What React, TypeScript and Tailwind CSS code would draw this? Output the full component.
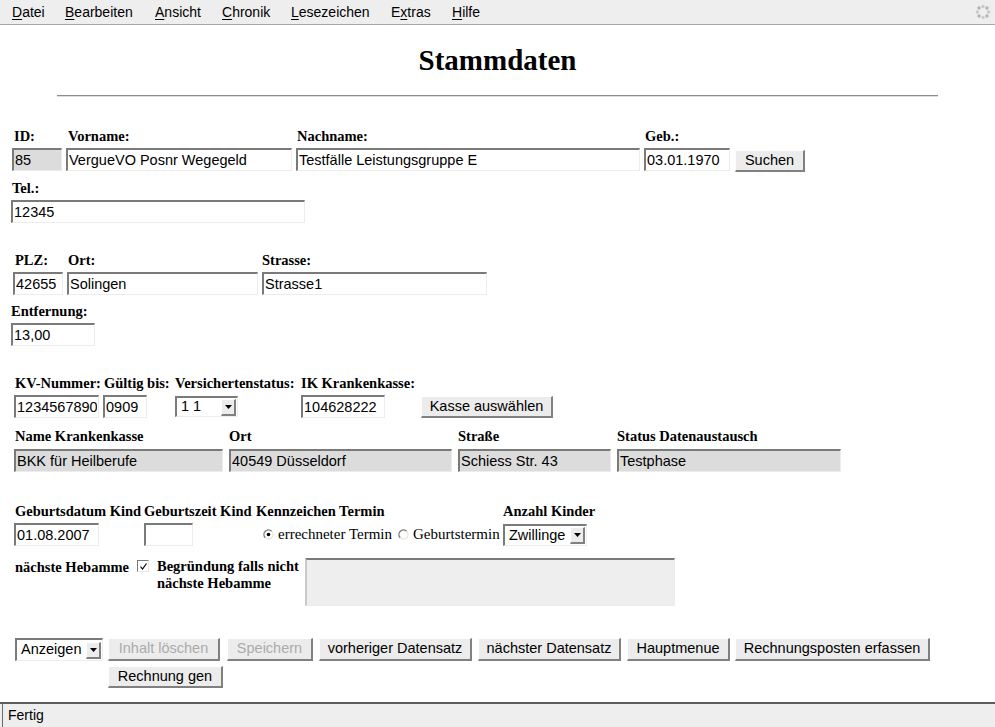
const serif = "font-['Liberation_Serif','Times_New_Roman',serif]";

const insetBorder =
  "border-t-2 border-l-2 border-r border-b border-t-[#7a7a7a] border-l-[#7a7a7a] border-r-[#ececec] border-b-[#ececec]";
const outsetBorder =
  "border-t border-l border-r-2 border-b-2 border-t-white border-l-white border-r-[#808080] border-b-[#808080]";

function Label({ children, className = "" }: { children: React.ReactNode; className?: string }) {
  return (
    <div className={`h-4 whitespace-nowrap text-[14.5px] font-bold leading-4 ${serif} ${className}`}>
      {children}
    </div>
  );
}

function Input({
  w,
  value = "",
  gray = false,
  className = "",
}: {
  w: string;
  value?: string;
  gray?: boolean;
  className?: string;
}) {
  return (
    <input
      readOnly
      value={value}
      className={`block h-[23px] px-[1px] text-[14.5px] text-black outline-none ${insetBorder} ${
        gray ? "bg-[#dcdcdc]" : "bg-white"
      } ${w} ${className}`}
    />
  );
}

function Btn({
  w,
  label,
  disabled = false,
  h = "h-[23px]",
  className = "",
}: {
  w: string;
  label: string;
  disabled?: boolean;
  h?: string;
  className?: string;
}) {
  return (
    <button
      disabled={disabled}
      className={`flex shrink-0 items-center justify-center whitespace-nowrap bg-[#ececec] text-[14.5px] ${outsetBorder} ${
        disabled ? "text-[#ababab]" : "text-black"
      } ${w} ${h} ${className}`}
    >
      {label}
    </button>
  );
}

function Select({ w, value, h = "h-[23px]", className = "" }: { w: string; value: string; h?: string; className?: string }) {
  return (
    <div
      className={`flex shrink-0 items-center justify-between bg-white pl-[4px] pr-[1px] text-[14.5px] ${insetBorder} ${w} ${h} ${className}`}
    >
      <span className="whitespace-nowrap">{value}</span>
      <span className={`flex h-[17px] w-[15px] items-center justify-center bg-[#ececec] ${outsetBorder}`}>
        <svg width="7" height="6" viewBox="0 0 7 6">
          <path d="M0 1h7L3.5 5z" fill="#000" />
        </svg>
      </span>
    </div>
  );
}

function Radio({ checked }: { checked: boolean }) {
  return (
    <svg width="11" height="11" viewBox="0 0 11 11" className="shrink-0">
      <path d="M2.3 8.7A4.5 4.5 0 0 1 8.7 2.3" fill="none" stroke="#7a7a7a" strokeWidth="1.4" />
      <path d="M8.7 2.3A4.5 4.5 0 0 1 2.3 8.7" fill="none" stroke="#e4e4e4" strokeWidth="1.2" />
      {checked && <circle cx="5.5" cy="5.5" r="1.8" fill="#000" />}
    </svg>
  );
}

function Throbber() {
  const dots = Array.from({ length: 8 }, (_, i) => {
    const a = (i / 8) * Math.PI * 2;
    return { x: 8 + Math.cos(a) * 5.6, y: 8 + Math.sin(a) * 5.6 };
  });
  return (
    <svg width="16" height="16" viewBox="0 0 16 16">
      {dots.map((d, i) => (
        <circle key={i} cx={d.x} cy={d.y} r="1.7" fill={i % 2 ? "#b4b4b4" : "#cacaca"} />
      ))}
    </svg>
  );
}

const menu = [
  { pre: "", u: "D", post: "atei", w: "w-[53px]" },
  { pre: "", u: "B", post: "earbeiten", w: "w-[90px]" },
  { pre: "", u: "A", post: "nsicht", w: "w-[67px]" },
  { pre: "", u: "C", post: "hronik", w: "w-[69px]" },
  { pre: "", u: "L", post: "esezeichen", w: "w-[100px]" },
  { pre: "E", u: "x", post: "tras", w: "w-[61px]" },
  { pre: "", u: "H", post: "ilfe", w: "w-[40px]" },
];

export default function App() {
  return (
    <div className="flex h-screen flex-col overflow-hidden bg-white font-['Liberation_Sans',Arial,sans-serif] text-black">
      {/* menu bar */}
      <div className="flex h-[25px] shrink-0 items-center border-b border-b-[#a9a9a9] bg-[#eeeeee] pl-[12px] pr-[4px] text-[14px]">
        {menu.map((m) => (
          <span key={m.u} className={`whitespace-nowrap ${m.w}`}>
            {m.pre}
            <span className="underline underline-offset-2">{m.u}</span>
            {m.post}
          </span>
        ))}
        <span className="ml-auto">
          <Throbber />
        </span>
      </div>

      <div className="min-h-0 flex-1 px-[8px]">
        <h1 className={`mt-[19px] text-center text-[29px] font-bold leading-[33px] ${serif}`}>Stammdaten</h1>
        <div className="mx-auto mt-[18px] h-[2px] w-[90%] border-t border-b border-t-[#8c8c8c] border-b-[#dedede]" />

        {/* ID / Vorname / Nachname / Geb. */}
        <div className="mt-[31px] flex items-start">
          <div className="ml-[4px] w-[54px]">
            <Label className="pl-[2px]">ID:</Label>
            <Input w="w-[50px]" value="85" gray className="mt-[4px]" />
          </div>
          <div className="w-[230px]">
            <Label className="pl-[2px]">Vorname:</Label>
            <Input w="w-[226px]" value="VergueVO Posnr Wegegeld" className="mt-[4px]" />
          </div>
          <div className="w-[348px]">
            <Label className="pl-[1px]">Nachname:</Label>
            <Input w="w-[344px]" value="Testfälle Leistungsgruppe E" className="mt-[4px]" />
          </div>
          <div className="w-[91px]">
            <Label className="pl-[1px]">Geb.:</Label>
            <Input w="w-[86px]" value="03.01.1970" className="mt-[4px]" />
          </div>
          <div className="pt-[22px]">
            <Btn w="w-[70px]" h="h-[22px]" label="Suchen" />
          </div>
        </div>

        {/* Tel */}
        <div className="ml-[3px] mt-[8px]">
          <Label className="pl-[1px]">Tel.:</Label>
          <Input w="w-[294px]" value="12345" className="mt-[4px]" />
        </div>

        {/* PLZ / Ort / Strasse */}
        <div className="mt-[29px] flex items-start">
          <div className="ml-[5px] w-[54px]">
            <Label className="pl-[2px]">PLZ:</Label>
            <Input w="w-[50px]" value="42655" className="mt-[4px]" />
          </div>
          <div className="w-[195px]">
            <Label className="pl-[1px]">Ort:</Label>
            <Input w="w-[191px]" value="Solingen" className="mt-[4px]" />
          </div>
          <div>
            <Label>Strasse:</Label>
            <Input w="w-[225px]" value="Strasse1" className="mt-[4px]" />
          </div>
        </div>

        {/* Entfernung */}
        <div className="ml-[3px] mt-[8px]">
          <Label>Entfernung:</Label>
          <Input w="w-[84px]" value="13,00" className="mt-[4px]" />
        </div>

        {/* KV row */}
        <div className="mt-[29px] flex items-start">
          <div className="ml-[6px] w-[89px]">
            <Label className="pl-[1px]">KV-Nummer:</Label>
            <Input w="w-[85px]" value="1234567890" className="mt-[4px]" />
          </div>
          <div className="w-[72px]">
            <Label className="pl-[1px]">Gültig bis:</Label>
            <Input w="w-[44px]" value="0909" className="mt-[4px]" />
          </div>
          <div className="w-[126px]">
            <Label>Versichertenstatus:</Label>
            <Select w="w-[63px]" h="h-[21px]" value="1 1" className="mt-[5px]" />
          </div>
          <div className="w-[120px]">
            <Label>IK Krankenkasse:</Label>
            <Input w="w-[84px]" value="104628222" className="mt-[4px]" />
          </div>
          <div className="pt-[21px]">
            <Btn w="w-[132px]" h="h-[22px]" label="Kasse auswählen" />
          </div>
        </div>

        {/* Krankenkasse details */}
        <div className="mt-[10px] flex items-start">
          <div className="ml-[6px] w-[215px]">
            <Label className="pl-[1px]">Name Krankenkasse</Label>
            <Input w="w-[209px]" value="BKK für Heilberufe" gray className="mt-[5px]" />
          </div>
          <div className="w-[229px]">
            <Label>Ort</Label>
            <Input w="w-[223px]" value="40549 Düsseldorf" gray className="mt-[5px]" />
          </div>
          <div className="w-[159px]">
            <Label>Straße</Label>
            <Input w="w-[153px]" value="Schiess Str. 43" gray className="mt-[5px]" />
          </div>
          <div>
            <Label>Status Datenaustausch</Label>
            <Input w="w-[224px]" value="Testphase" gray className="mt-[5px]" />
          </div>
        </div>

        {/* Kind */}
        <div className="mt-[31px] flex items-start">
          <div className="ml-[6px] w-[130px]">
            <Label className="pl-[1px]">Geburtsdatum Kind</Label>
            <Input w="w-[85px]" value="01.08.2007" className="mt-[4px]" />
          </div>
          <div className="w-[112px]">
            <Label>Geburtszeit Kind</Label>
            <Input w="w-[49px]" className="mt-[4px]" />
          </div>
          <div className="w-[247px]">
            <Label>Kennzeichen Termin</Label>
            <div className={`mt-[4px] flex h-[23px] items-center text-[15px] ${serif}`}>
              <span className="ml-[7px]">
                <Radio checked />
              </span>
              <span className="ml-[4px] w-[116px] whitespace-nowrap">errechneter Termin</span>
              <span className="ml-[4px]">
                <Radio checked={false} />
              </span>
              <span className="ml-[4px] whitespace-nowrap">Geburtstermin</span>
            </div>
          </div>
          <div>
            <Label>Anzahl Kinder</Label>
            <Select w="w-[84px]" h="h-[22px]" value="Zwillinge" className="mt-[5px]" />
          </div>
        </div>

        {/* Hebamme */}
        <div className="mt-[12px] flex items-start">
          <Label className="ml-[7px] mt-[1px] w-[122px]">nächste Hebamme</Label>
          <span className="mt-[2px] flex h-[12px] w-[12px] shrink-0 items-center justify-center border border-t-[#7a7a7a] border-l-[#7a7a7a] border-r-[#e6e6e6] border-b-[#e6e6e6] bg-white">
            <svg width="9" height="9" viewBox="0 0 9 9">
              <path d="M1.5 4.5L3.5 7L7.5 1.5" fill="none" stroke="#000" strokeWidth="1.2" />
            </svg>
          </span>
          <div className={`ml-[8px] w-[148px] text-[14.5px] font-bold leading-[17px] ${serif}`}>
            Begründung falls nicht
            <br />
            nächste Hebamme
          </div>
          <div className={`h-[48px] w-[370px] bg-[#eeeeee] ${insetBorder} border-l-[#c9c9c9]`} />
        </div>

        {/* actions */}
        <div className="mt-[32px] flex items-start">
          <Select w="w-[88px]" value="Anzeigen" className="ml-[7px]" />
          <Btn w="w-[112px]" label="Inhalt löschen" disabled className="ml-[5px]" />
          <Btn w="w-[86px]" label="Speichern" disabled className="ml-[7px]" />
          <Btn w="w-[153px]" label="vorheriger Datensatz" className="ml-[6px]" />
          <Btn w="w-[143px]" label="nächster Datensatz" className="ml-[6px]" />
          <Btn w="w-[103px]" label="Hauptmenue" className="ml-[6px]" />
          <Btn w="w-[195px]" label="Rechnungsposten erfassen" className="ml-[5px]" />
        </div>
        <div className="mt-[5px] flex">
          <Btn w="w-[115px]" h="h-[22px]" label="Rechnung gen" className="ml-[100px]" />
        </div>
      </div>

      {/* status bar */}
      <div className="flex h-[25px] shrink-0 border-t-2 border-t-[#5c5c5c] bg-[#eeeeee] text-[14px]">
        <div className="ml-[2px] flex flex-1 items-center border-l border-l-[#6a6a6a] pl-[5px]">Fertig</div>
      </div>
    </div>
  );
}
